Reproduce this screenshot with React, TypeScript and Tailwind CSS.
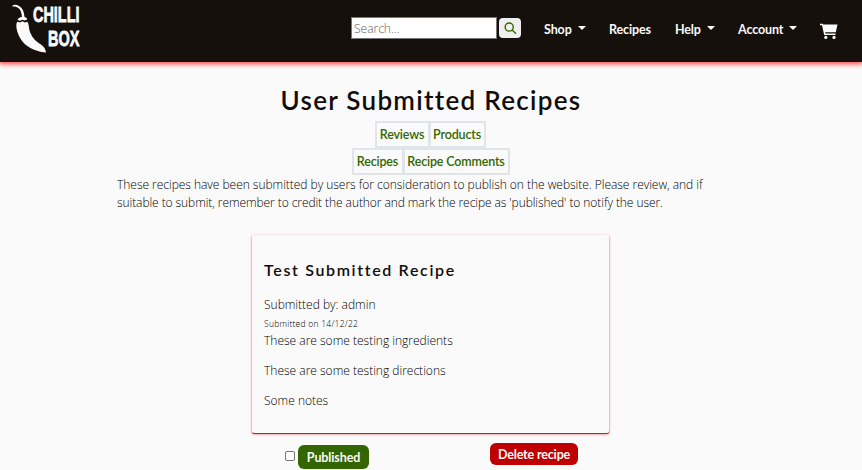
import type { ReactNode } from 'react';

function Logo() {
  return (
    <a href="#" className="flex h-[56px] w-[74px] shrink-0">
      <svg viewBox="0 0 74 56" width="74" height="56" fill="#fafafa" className="overflow-visible">
        <path d="M0 6.500C1 4.500 4 4.200 7 6c4 2.200 5 6 5.500 11 1.300.3 2.500 1 2.700 2.600l-2.500.8-2.400-.7-2.300 1-2.400-.8c.2-1.600 2-2.800 4.300-3C9.600 12.500 8.500 9.500 6 7.800 4 6.400 2 6.200 0 6.500z" />
        <path d="M5.300 21.700l2.700.8 2.500-1.300 2.300 1.300 2.500-.8c1.500 1.800 1.400 4.500 2 7.500.8 5 4.500 10.300 8.700 13.300 3.500 2.700 7.300 4 8 9.900-3-.1-7.600-.8-12.500-2.900C13 46 7.800 39.500 5.600 32.500 4.400 28.500 3.700 24 5.300 21.700z" />
        <g fontFamily="'Liberation Sans Narrow', 'Liberation Sans', sans-serif" fontWeight="bold" fontSize="22" stroke="#fafafa" strokeWidth=".8">
          <text x="21" y="21.500" textLength="46.500" lengthAdjust="spacingAndGlyphs">CHILLI</text>
          <text x="36" y="45.500" textLength="31.500" lengthAdjust="spacingAndGlyphs">BOX</text>
        </g>
      </svg>
    </a>
  );
}

function NavLink({ children, className, menu }: { children: ReactNode; className: string; menu?: boolean }) {
  return (
    <a href="#" className={`flex h-[22px] items-center whitespace-nowrap font-[Lato] text-[12.5px] font-bold tracking-[-0.12px] text-[#fafafa] ${className}`}>
      {children}
      {menu && <span className="mb-[4px] ml-[6px] border-x-4 border-t-4 border-x-transparent border-t-[#fafafa]" />}
    </a>
  );
}

function Tab({ children, className }: { children: ReactNode; className: string }) {
  return (
    <a href="#" className={`flex h-[27px] items-center justify-center border-2 border-[#e1e4e8] font-[Lato] text-[12.5px] font-semibold tracking-[-0.16px] whitespace-nowrap text-[#336600] ${className}`}>
      {children}
    </a>
  );
}

export default function App() {
  return (
    <div className="h-[470px] overflow-hidden bg-[#fafafa] font-['Open_Sans',sans-serif] text-[12px] leading-[18px] font-light text-black">
      <header className="flex h-[62px] bg-[#15100c] pl-3 shadow-[0_1px_5px_1px_#ff4040]">
        <Logo />
        <form className="mt-[17px] ml-[265px] flex h-[22px] items-center">
          <input
            type="text"
            placeholder="Search..."
            className="h-[22px] w-[146px] border border-[#767676] bg-white px-0.5 text-[12px] font-light placeholder:text-[#606060]"
          />
          <button type="button" aria-label="Search" className="ml-[2px] flex h-5 w-[22px] items-center justify-center rounded bg-[#efefef]">
            <svg viewBox="0 0 14 14" width="13" height="13" fill="none" stroke="#336600" strokeWidth="1.5">
              <circle cx="5.600" cy="5.400" r="4.400" />
              <path d="M8.800 8.600L13 12.600" />
            </svg>
          </button>
        </form>
        <nav className="mt-[19px] flex h-5">
          <NavLink className="ml-[23px] w-[65px]" menu>Shop</NavLink>
          <NavLink className="w-[66px]">Recipes</NavLink>
          <NavLink className="w-[63px]" menu>Help</NavLink>
          <NavLink className="w-[82px]" menu>Account</NavLink>
          <a href="#" aria-label="Cart" className="mt-1 text-[#fafafa]">
            <svg viewBox="0 0 18 17" width="18" height="17" fill="currentColor">
              <path d="M0 .8h2.800L3.300 1.600H17.500L15.800 9.300H5.200l.3 1.200h10v1.500H4.200L2 2.300H0z" />
              <circle cx="5.800" cy="14.400" r="1.600" />
              <circle cx="14" cy="14.400" r="1.600" />
            </svg>
          </a>
        </nav>
      </header>

      <main>
        <h1 className="mt-[19px] mb-[2px] flex h-[38px] items-center justify-center font-[Lato] text-[26px] font-semibold tracking-[1.28px] whitespace-nowrap text-[#100c0c]">
          User Submitted Recipes
        </h1>
        <div className="flex justify-center pr-[2px]">
          <Tab className="w-[55px]">Reviews</Tab>
          <Tab className="-ml-px w-[57px]">Products</Tab>
        </div>
        <div className="flex justify-center pr-px">
          <Tab className="w-[52px]">Recipes</Tab>
          <Tab className="-ml-px w-[107px]">Recipe Comments</Tab>
        </div>
        <p className="-mb-px ml-[117px] pt-px whitespace-nowrap">
          <span className="block tracking-[-0.03px]">These recipes have been submitted by users for consideration to publish on the website. Please review, and if</span>
          <span className="block tracking-[-0.075px]">suitable to submit, remember to credit the author and mark the recipe as 'published' to notify the user.</span>
        </p>

        <article className="mt-6 ml-[252px] h-[198px] w-[357px] rounded-[2px] bg-[#fafafa] px-3 pt-[23px] shadow-[0_1px_3px_0_#e0202080,0_1px_1px_0_#b01010]">
          <h2 className="h-6 font-[Lato] text-[16px] leading-6 font-semibold tracking-[1.65px] whitespace-nowrap text-[#100c0c]">Test Submitted Recipe</h2>
          <p className="mt-[14px]">Submitted by: admin</p>
          <p className="h-[18px] text-[8.500px] leading-[19px] tracking-[0.25px]">Submitted on 14/12/22</p>
          <p>These are some testing ingredients</p>
          <p className="mt-3">These are some testing directions</p>
          <p className="mt-3">Some notes</p>
        </article>

        <div className="flex pt-[10px] pl-[285px]">
          <input type="checkbox" className="mt-2 h-[10px] w-[10px] appearance-none rounded-[2px] border border-[#767676] bg-white" />
          <button type="button" className="mt-[2px] ml-[3px] h-6 w-[71px] rounded-md bg-[#336600] pt-px font-[Lato] text-[12.5px] font-bold tracking-[-0.12px] text-[#fafafa]">
            Published
          </button>
          <button type="button" className="ml-[121px] h-[22px] w-[88px] rounded-md bg-[#bf0000] pt-px font-[Lato] text-[12.5px] font-bold tracking-[-0.16px] whitespace-nowrap text-[#fafafa]">
            Delete recipe
          </button>
        </div>
      </main>
    </div>
  );
}
